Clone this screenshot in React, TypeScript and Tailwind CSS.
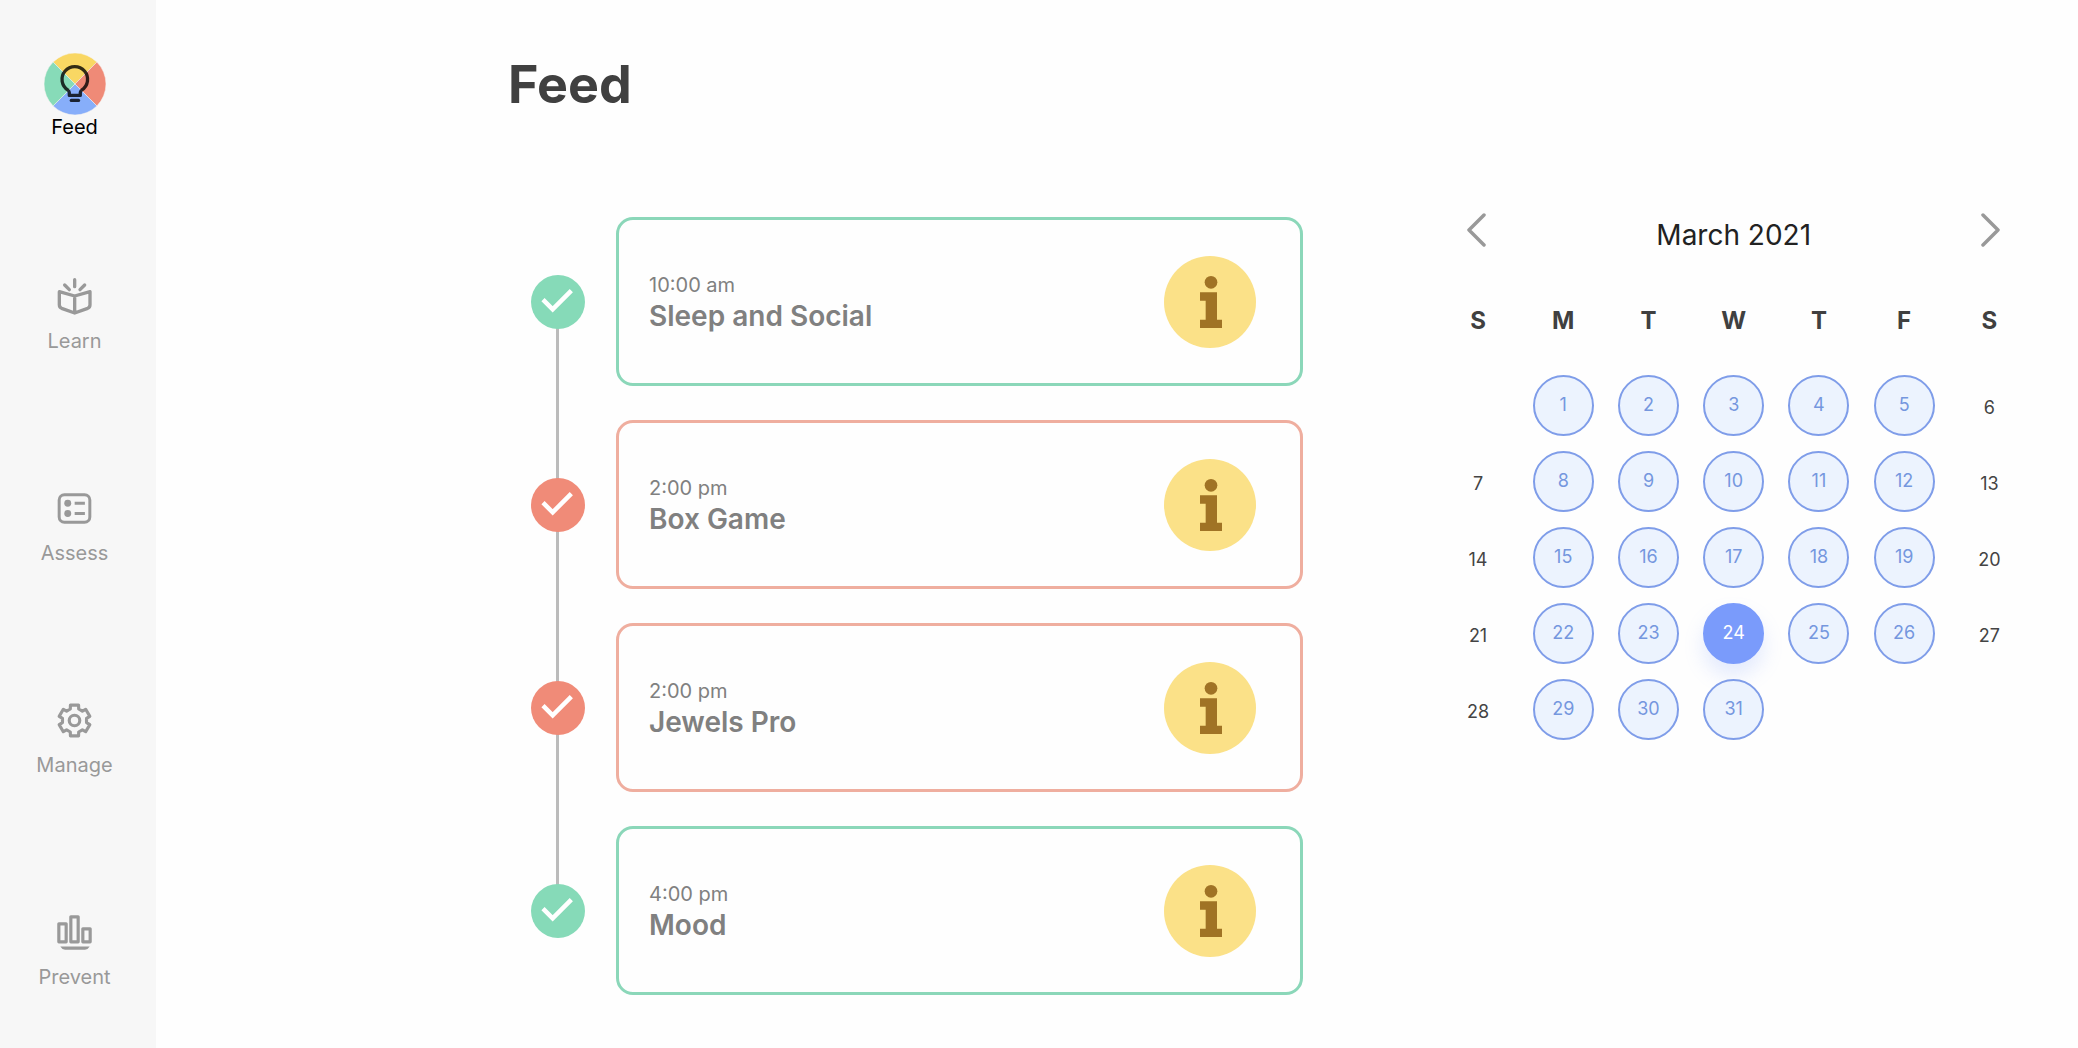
import type { ReactNode } from "react";

function FeedIcon() {
  return (
    <svg viewBox="0 0 62 62" className="size-[62px]" aria-hidden="true">
      <g stroke="#f7f3ee" strokeWidth="0.5">
        <path d="M31 31 L9.1 9.1 A31 31 0 0 1 52.9 9.1 Z" fill="#f9d763" />
        <path d="M31 31 L52.9 9.1 A31 31 0 0 1 52.9 52.9 Z" fill="#ef8a77" />
        <path d="M31 31 L52.9 52.9 A31 31 0 0 1 9.1 52.9 Z" fill="#87aefa" />
        <path d="M31 31 L9.1 52.9 A31 31 0 0 1 9.1 9.1 Z" fill="#87dbb8" />
      </g>
      <g fill="none" stroke="#000" strokeOpacity="0.8" strokeWidth="3.3" strokeLinejoin="round">
        <path d="M25.3 42.4 V39.6 Q25.3 38.2 24 37.2 A12.8 12.8 0 1 1 37.6 37.2 Q36.3 38.2 36.3 39.6 V42.4 Z" />
        <path d="M27.3 47.4 H34.5" strokeLinecap="round" />
      </g>
    </svg>
  );
}

function LearnIcon() {
  return (
    <svg viewBox="0 0 105 111" className="h-[37px] w-[35px]" fill="none" stroke="currentColor" strokeWidth="10" strokeLinejoin="round" aria-hidden="true">
      <path d="M7 41 L53 54 L99 41 V80 Q99 88 92 91 L53 105 L14 91 Q7 88 7 80 Z M53 54 V105" />
      <path d="M53 5 V26 M23 21 L37 35 M83 21 L69 35" strokeLinecap="round" />
    </svg>
  );
}

function AssessIcon() {
  return (
    <svg viewBox="0 0 105 94" className="h-[31px] w-[35px]" fill="none" stroke="currentColor" strokeWidth="9" aria-hidden="true">
      <rect x="6" y="5" width="93" height="84" rx="16" />
      <path d="M53 31 H84 M53 62 H84" />
      <g fill="currentColor" stroke="none">
        <circle cx="32" cy="31" r="10.5" />
        <circle cx="32" cy="62" r="10.5" />
      </g>
    </svg>
  );
}

const gearPoints = [0, 60, 120, 180, 240, 300]
  .flatMap((turn) =>
    [
      [-20, 37],
      [-15, 48],
      [15, 48],
      [20, 37],
    ].map(([angle, radius]) => {
      const a = ((turn + angle) * Math.PI) / 180;
      return `${(53 + radius * Math.sin(a)).toFixed(1)},${(53 - radius * Math.cos(a)).toFixed(1)}`;
    }),
  )
  .join(" ");

function ManageIcon() {
  return (
    <svg viewBox="0 0 106 106" className="size-[35px]" fill="none" stroke="currentColor" strokeWidth="9.5" strokeLinejoin="round" aria-hidden="true">
      <polygon points={gearPoints} />
      <circle cx="53" cy="53" r="16" />
    </svg>
  );
}

function PreventIcon() {
  return (
    <svg viewBox="0 0 105 104" className="size-[35px]" fill="none" stroke="currentColor" strokeWidth="9.5" strokeLinejoin="round" aria-hidden="true">
      <rect x="5.5" y="26" width="22" height="54" />
      <rect x="41.5" y="5" width="22" height="75" />
      <rect x="77.5" y="41" width="22" height="39" />
      <path d="M10 94 H98 Q92 104 84 104 H24 Q16 104 10 94 Z" fill="currentColor" stroke="none" />
    </svg>
  );
}

const navItems: { label: string; icon: ReactNode; active?: boolean }[] = [
  { label: "Feed", icon: <FeedIcon />, active: true },
  { label: "Learn", icon: <LearnIcon /> },
  { label: "Assess", icon: <AssessIcon /> },
  { label: "Manage", icon: <ManageIcon /> },
  { label: "Prevent", icon: <PreventIcon /> },
];

function Sidebar() {
  return (
    <nav className="flex w-[156px] shrink-0 flex-col gap-[120px] bg-[#f7f7f7] pt-[53px] pr-[7px]">
      {navItems.map(({ label, icon, active }) => (
        <a
          key={label}
          href={`#${label.toLowerCase()}`}
          aria-current={active ? "page" : undefined}
          className={`flex h-[92px] flex-col items-center ${active ? "text-black" : "text-[#999999]"}`}
        >
          <span className="flex h-[62px] items-center justify-center">{icon}</span>
          <span className={`text-xl leading-6 ${active ? "" : "mt-0.5"}`}>{label}</span>
        </a>
      ))}
    </nav>
  );
}

const events = [
  { time: "10:00 am", title: "Sleep and Social", done: true },
  { time: "2:00 pm", title: "Box Game", done: false },
  { time: "2:00 pm", title: "Jewels Pro", done: false },
  { time: "4:00 pm", title: "Mood", done: true },
];

function CheckBadge({ done }: { done: boolean }) {
  return (
    <svg viewBox="0 0 162 162" className={`relative size-[54px] ${done ? "text-[#86dab8]" : "text-[#f08b78]"}`} aria-hidden="true">
      <circle cx="81" cy="81" r="81" fill="currentColor" />
      <path d="M36 74 L65 103 L121 47" fill="none" stroke="#fff" strokeWidth="13.5" />
    </svg>
  );
}

function InfoIcon() {
  return (
    <svg viewBox="0 0 276 276" className="size-[92px]" aria-hidden="true">
      <circle cx="138" cy="138" r="138" fill="#fbe188" />
      <g fill="#a07325">
        <circle cx="141" cy="79" r="19" />
        <path d="M108 109 H159 V191 H174 V216 H108 V191 H125 V134 H108 Z" />
      </g>
    </svg>
  );
}

function Timeline() {
  return (
    <ol className="flex flex-col gap-[34px] pl-[23px]">
      {events.map(({ time, title, done }, i) => (
        <li key={title} className="flex gap-[31px]">
          <div className="relative flex w-[54px] items-center">
            {i < events.length - 1 && (
              <span className="absolute top-1/2 left-[25px] h-[203px] w-[3px] bg-[#bbbbbb]" />
            )}
            <CheckBadge done={done} />
          </div>
          <article
            className={`flex h-[169px] flex-1 items-center justify-between rounded-[17px] border-[3px] pr-11 pl-[30px] ${
              done ? "border-[#8bd7b9]" : "border-[#efae9f]"
            }`}
          >
            <div className="text-[#808080]">
              <p className="text-xl leading-7">{time}</p>
              <h2 className="text-[28px] leading-[34px] font-semibold">{title}</h2>
            </div>
            <button type="button" aria-label={`About ${title}`}>
              <InfoIcon />
            </button>
          </article>
        </li>
      ))}
    </ol>
  );
}

const weekdays = ["S", "M", "T", "W", "T", "F", "S"];
const weeks = [0, 1, 2, 3, 4].map((w) => weekdays.map((_, d) => w * 7 + d));
const today = 24;

function Day({ day, weekend }: { day: number; weekend: boolean }) {
  if (day < 1 || day > 31) return null;
  if (weekend) return <span className="block pt-1.5 text-[#444444]">{day}</span>;
  return (
    <button
      type="button"
      className={`mx-auto block size-[61px] rounded-full border-2 ${
        day === today
          ? "border-[#7a9bfb] bg-[#7a9bfb] text-white shadow-[0_12px_20px_rgba(122,155,251,0.2)]"
          : "border-[#7f9de9] bg-[#ecf3fe] text-[#7597de]"
      }`}
    >
      {day}
    </button>
  );
}

function Chevron({ d }: { d: string }) {
  return (
    <svg viewBox="0 0 20 34" className="h-[34px] w-5" fill="none" stroke="#999999" strokeWidth="3.5" strokeLinecap="round" strokeLinejoin="round" aria-hidden="true">
      <path d={d} />
    </svg>
  );
}

function Calendar() {
  return (
    <section aria-label="Calendar">
      <div className="flex items-start justify-between px-[31px]">
        <button type="button" aria-label="Previous month" className="-mt-1">
          <Chevron d="M18 2 L3 17 L18 32" />
        </button>
        <h2 className="text-[28px] leading-9 text-[#222222]">March 2021</h2>
        <button type="button" aria-label="Next month" className="-mt-1">
          <Chevron d="M2 2 L17 17 L2 32" />
        </button>
      </div>
      <table className="mt-[43px] w-full table-fixed text-center">
        <thead>
          <tr className="h-[71px] align-top text-2xl leading-[50px] text-[#404040]">
            {weekdays.map((d, i) => (
              <th key={i} scope="col" className="p-0 font-bold">
                {d}
              </th>
            ))}
          </tr>
        </thead>
        <tbody>
          {weeks.map((week, w) => (
            <tr key={w} className="h-[76px] text-lg">
              {week.map((day, i) => (
                <td key={i} className="p-0 align-middle">
                  <Day day={day} weekend={i === 0 || i === 6} />
                </td>
              ))}
            </tr>
          ))}
        </tbody>
      </table>
    </section>
  );
}

export default function App() {
  return (
    <div className="flex min-h-screen bg-[#fefefe] font-['Inter',sans-serif]">
      <Sidebar />
      <main className="flex-1 pt-[53px] pr-[46px] pb-[52px] pl-[352px]">
        <h1 className="text-[52px] leading-[64px] font-bold text-[#404040]">Feed</h1>
        <div className="mt-[100px] grid grid-cols-[4fr_3fr] items-start gap-33">
          <Timeline />
          <Calendar />
        </div>
      </main>
    </div>
  );
}
